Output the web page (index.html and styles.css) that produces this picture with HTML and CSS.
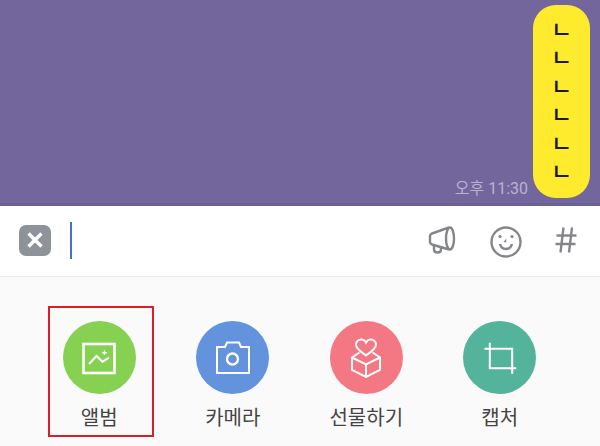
FILE: index.html
```html
<!DOCTYPE html>
<html lang="ko">
<head>
  <meta charset="UTF-8">
  <meta name="viewport" content="width=device-width, initial-scale=1.0">
  <title>채팅</title>
  <link rel="stylesheet" href="styles.css">
</head>
<body>
  <div class="chat">
    <span class="chat-time">오후 11:30</span>
    <div class="bubble">
      <span>ㄴ</span>
      <span>ㄴ</span>
      <span>ㄴ</span>
      <span>ㄴ</span>
      <span>ㄴ</span>
      <span>ㄴ</span>
    </div>
  </div>

  <div class="input-bar">
    <div class="close-btn">
      <svg width="18" height="18" viewBox="0 0 18 18">
        <path d="M2.500 2.500L15.500 15.500M15.500 2.500L2.500 15.500" stroke="#fff" stroke-width="3.400" fill="none"/>
      </svg>
    </div>
    <div class="cursor"></div>
    <div class="input-icons">
      <svg class="icon-horn" width="28" height="28" viewBox="0 0 28 28">
        <path d="M21 1.500L4 7.500C2.500 8 2 9 2 10V16C2 17 2.500 18 4 18.500L21 23.500" />
        <ellipse cx="22" cy="12.500" rx="4" ry="11" />
        <path d="M6 19V23.500C6 25.500 7.500 26.500 9.500 26.500C11.500 26.500 13 25.500 13 23.500V21" />
      </svg>
      <svg class="icon-smile" width="32" height="32" viewBox="0 0 32 32">
        <circle cx="16" cy="16" r="14.500" />
        <path d="M10 18C11 22 13.500 23 16 23C18.500 23 21 22 22 18" />
        <path d="M16 13.500L14.800 15.500H16.300" stroke-width="1.300" />
        <circle class="dot" cx="10" cy="10.500" r="1.600" />
        <circle class="dot" cx="22" cy="10.500" r="1.600" />
      </svg>
      <svg class="icon-hash" width="24" height="28" viewBox="0 0 24 28">
        <path d="M9.500 1.500L6.500 26.500M18 1.500L15 26.500M2.500 9.500H22.500M1.500 18H21.500" />
      </svg>
    </div>
  </div>

  <div class="tray">
    <div class="tray-item">
      <div class="highlight"></div>
      <div class="tray-circle green">
        <svg width="36" height="36" viewBox="0 0 36 36">
          <rect x="2.500" y="4" width="31" height="29" stroke-width="2.600" />
          <path d="M8 24L15.500 16L21.500 21.700L28 17.700" />
          <path d="M23.500 10.500V15M21.300 12.700H25.700" stroke-width="1.400" />
        </svg>
      </div>
      <div class="tray-label">앨범</div>
    </div>
    <div class="tray-item">
      <div class="tray-circle blue">
        <svg width="36" height="36" viewBox="0 0 36 36">
          <path d="M2 7H10L12 2.500H24L26 7H34V33H2Z" />
          <circle cx="17.500" cy="19" r="5.500" stroke-width="2.400" />
        </svg>
      </div>
      <div class="tray-label">카메라</div>
    </div>
    <div class="tray-item">
      <div class="tray-circle pink">
        <svg width="30" height="40" viewBox="0 0 30 40">
          <path d="M15 17.500C10.500 14 5 11 5 6.500C5 3.500 7.500 1.500 10 1.500C12 1.500 14 2.500 15 4.500C16 2.500 18 1.500 20 1.500C22.500 1.500 25 3.500 25 6.500C25 11 19.500 14 15 17.500Z" />
          <path d="M8.500 14.500L1 19.500V32L15 39L29 32V19.500L21.500 14.500" />
          <path d="M1 19.500L15 26.500L29 19.500M15 26.500V39" />
        </svg>
      </div>
      <div class="tray-label">선물하기</div>
    </div>
    <div class="tray-item">
      <div class="tray-circle teal">
        <svg width="34" height="34" viewBox="0 0 34 34">
          <path d="M1.500 7.700H29.200V32.700" />
          <path d="M6.800 1.700V27.300H33.200" />
        </svg>
      </div>
      <div class="tray-label">캡처</div>
    </div>
  </div>
</body>
</html>
```

FILE: styles.css
```css
* {
  box-sizing: border-box;
}

html, body {
  height: 100%;
}

body {
  margin: 0;
  font-family: "Noto Sans CJK KR", "Noto Sans", sans-serif;
  background: #fafafa;
  overflow: hidden;
}

.chat {
  height: 206px;
  padding: 5px 10px 5px 0;
  background: #72669d;
  border-bottom: 3px solid #6c6094;
  display: flex;
  justify-content: flex-end;
  align-items: flex-end;
  gap: 5px;
}

.chat-time {
  font-family: "Roboto", "Noto Sans CJK KR", sans-serif;
  font-size: 16px;
  line-height: 18px;
  color: #b9b3d2;
}

.bubble {
  width: 57px;
  height: 193px;
  padding: 11px 0 0;
  border-radius: 23px;
  background: #ffeb2d;
  color: #1c1a10;
  font-family: "Liberation Sans", "Noto Sans CJK KR", sans-serif;
  font-size: 23px;
  font-weight: 500;
  line-height: 28px;
  display: flex;
  flex-direction: column;
  align-items: center;
  gap: 0.400px;
}

.input-bar {
  height: 71px;
  padding: 0 22px 2px 19px;
  background: #fff;
  border-bottom: 1px solid #ececec;
  display: flex;
  align-items: center;
}

.close-btn {
  width: 32px;
  height: 31px;
  border-radius: 7px;
  background: #8e9299;
  display: flex;
  align-items: center;
  justify-content: center;
}

.cursor {
  width: 2px;
  height: 37px;
  margin-left: 19px;
  background: #3a78c4;
}

.input-icons {
  margin-left: auto;
  display: flex;
  align-items: center;
}

.input-icons svg {
  fill: none;
  stroke: #85868a;
  stroke-width: 2.400;
}

.input-icons .dot {
  fill: #85868a;
  stroke: none;
}

.icon-horn {
  margin-right: 34px;
}

.icon-smile {
  margin-right: 32px;
  margin-top: 3px;
}

.tray {
  padding: 44px 33.500px 0 32.500px;
  display: grid;
  grid-template-columns: repeat(4, 1fr);
}

.tray-item {
  position: relative;
  display: flex;
  flex-direction: column;
  align-items: center;
}

.tray-circle {
  width: 73px;
  height: 73px;
  border-radius: 50%;
  display: flex;
  align-items: center;
  justify-content: center;
}

.tray-circle svg {
  fill: none;
  stroke: #fff;
  stroke-width: 2;
}

.green { background: #86d052; }
.blue { background: #6293dc; }
.pink { background: #f47883; }
.teal { background: #54b39b; }

.tray-label {
  margin-top: 8px;
  font-size: 20px;
  line-height: 30px;
  color: #444;
}

.highlight {
  position: absolute;
  left: 15px;
  top: -15px;
  width: 106px;
  height: 131px;
  border: 2px solid #d9202a;
}
```
